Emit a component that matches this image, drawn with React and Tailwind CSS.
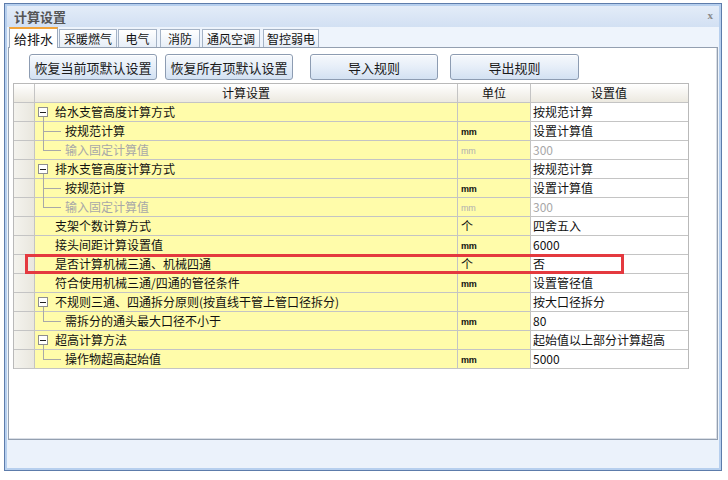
import React from "react";

const rows = [
  { t: "group", name: "给水支管高度计算方式", unit: "", value: "按规范计算" },
  { t: "child", name: "按规范计算", unit: "mm", value: "设置计算值" },
  { t: "child", last: true, dis: true, name: "输入固定计算值", unit: "mm", value: "300" },
  { t: "group", name: "排水支管高度计算方式", unit: "", value: "按规范计算" },
  { t: "child", name: "按规范计算", unit: "mm", value: "设置计算值" },
  { t: "child", last: true, dis: true, name: "输入固定计算值", unit: "mm", value: "300" },
  { t: "plain", name: "支架个数计算方式", unit: "个", value: "四舍五入" },
  { t: "plain", name: "接头间距计算设置值", unit: "mm", value: "6000" },
  { t: "plain", name: "是否计算机械三通、机械四通", unit: "个", value: "否" },
  { t: "plain", name: "符合使用机械三通/四通的管径条件", unit: "mm", value: "设置管径值" },
  { t: "group", name: "不规则三通、四通拆分原则(按直线干管上管口径拆分)", unit: "", value: "按大口径拆分" },
  { t: "child", last: true, name: "需拆分的通头最大口径不小于", unit: "mm", value: "80" },
  { t: "group", name: "超高计算方法", unit: "", value: "起始值以上部分计算超高" },
  { t: "child", last: true, name: "操作物超高起始值", unit: "mm", value: "5000" },
];

const tabs = [
  { t: "给排水", cls: "ml-[2px] w-[49px]" },
  { t: "采暖燃气", cls: "ml-[1px] w-[58px]" },
  { t: "电气", cls: "ml-[1px] w-[39px]" },
  { t: "消防", cls: "ml-[3px] w-[40px]" },
  { t: "通风空调", cls: "ml-[2px] w-[58px]" },
  { t: "智控弱电", cls: "ml-[3px] w-[56px]" },
];

function NameCell({ r }) {
  const color = r.dis ? "text-[#a8a8a8]" : "text-[#111]";
  if (r.t === "group") {
    return (
      <div className="relative w-[423px] h-full bg-[#fffcaa] border-r border-[#c4c4c4] flex items-center">
        <div className="absolute left-[3px] top-[4px] w-[10px] h-[10px] border border-[#8e8e8e] bg-white flex items-center justify-center">
          <div className="w-[6px] h-[1px] bg-[#222]" />
        </div>
        <div className="absolute left-[8px] top-[14px] w-[1px] h-[5px] bg-[#a8a8a8]" />
        <span className={`pl-[20px] ${color} whitespace-nowrap`}>{r.name}</span>
      </div>
    );
  }
  if (r.t === "child") {
    return (
      <div className="relative w-[423px] h-full bg-[#fffcaa] border-r border-[#c4c4c4] flex items-center">
        <div className={`absolute left-[8px] top-[-1px] w-[1px] bg-[#a8a8a8] ${r.last ? "h-[10px]" : "h-[20px]"}`} />
        <div className="absolute left-[8px] top-[9px] w-[18px] h-[1px] bg-[#a8a8a8]" />
        <span className={`pl-[30px] ${color} whitespace-nowrap`}>{r.name}</span>
      </div>
    );
  }
  return (
    <div className="relative w-[423px] h-full bg-[#fffcaa] border-r border-[#c4c4c4] flex items-center">
      <span className={`pl-[20px] ${color} whitespace-nowrap`}>{r.name}</span>
    </div>
  );
}

function Row({ r }) {
  return (
    <div className="flex h-[19px] border-b border-[#c4c4c4]">
      <div className="w-[21px] h-full bg-gradient-to-r from-[#f4f3ee] to-[#e9e7de] border-r border-[#c4c4c4]" />
      <NameCell r={r} />
      <div className="w-[73px] h-full bg-[#fffcaa] border-r border-[#c4c4c4] flex items-center pl-[3px]">
        {r.unit === "mm" ? (
          <span
            className={`text-[9px] pt-[3px] tracking-[-0.3px] ${r.dis ? "text-[#b0b0b0]" : "text-[#111] font-bold"}`}
            style={{ fontFamily: '"Liberation Sans", sans-serif' }}
          >
            mm
          </span>
        ) : (
          <span className="text-[#111]">{r.unit}</span>
        )}
      </div>
      <div className="w-[156px] h-full bg-white flex items-center pl-[2px]">
        <span className={r.dis ? "text-[#a8a8a8]" : "text-[#111]"}>{r.value}</span>
      </div>
    </div>
  );
}

function Btn({ children, w, ml }) {
  return (
    <div
      className={`${w} ${ml} h-[26px] rounded-[3px] border border-[#8d9cb2] bg-gradient-to-b from-[#f6f9fd] via-[#e6eef8] to-[#d3e1f2] flex items-center justify-center text-[13px] text-[#1a1a1a] shadow-[inset_0_1px_0_#ffffff]`}
    >
      {children}
    </div>
  );
}

export default function App() {
  return (
    <div
      className="w-[728px] h-[480px] bg-white pl-[4px] pt-[3px] text-[12px] leading-none"
      style={{ fontFamily: '"Noto Sans CJK SC", "Liberation Sans", sans-serif' }}
    >
      <div className="w-[718px] h-[468px] border border-[#5d7cab]">
        <div className="w-full h-full border-2 border-[#b6cfee] flex flex-col bg-[#eef4fb]">
          {/* Title bar */}
          <div className="h-[21px] flex items-center justify-between bg-gradient-to-b from-[#e3ecf8] to-[#d2e0f3] pl-[7px] pr-[6px]">
            <span className="text-[13px] font-bold text-[#555]">计算设置</span>
            <span className="text-[11px] font-bold text-[#8a8a8a] pb-[2px]" style={{ fontFamily: '"Liberation Serif", serif' }}>x</span>
          </div>
          {/* Tabs */}
          <div className="h-[20px] flex items-end bg-[#eef4fc] relative z-10">
            {tabs.map((tb, i) =>
              i === 0 ? (
                <div
                  key={tb.t}
                  className={`${tb.cls} h-[21px] mb-[-1px] flex items-center justify-center bg-white border border-[#9aa8bb] border-b-0 border-t-[2px] border-t-[#f2a43a] text-[13px] text-[#111]`}
                >
                  {tb.t}
                </div>
              ) : (
                <div
                  key={tb.t}
                  className={`${tb.cls} h-[18px] flex items-center justify-center bg-gradient-to-b from-white to-[#e7eef7] border border-[#a5b3c6] border-b-0 text-[12px] text-[#111]`}
                >
                  {tb.t}
                </div>
              )
            )}
          </div>
          {/* Panel */}
          <div className="ml-[1px] w-[710px] h-[393px] bg-white border border-[#939fb0] shadow-[inset_-1px_-1px_0_#d9dee6]">
            <div className="flex pt-[6px] pl-[20px]">
              <Btn w="w-[128px]" ml="">恢复当前项默认设置</Btn>
              <Btn w="w-[128px]" ml="ml-[8px]">恢复所有项默认设置</Btn>
              <Btn w="w-[128px]" ml="ml-[17px]">导入规则</Btn>
              <Btn w="w-[129px]" ml="ml-[12px]">导出规则</Btn>
            </div>
            <div className="relative mt-[3px] ml-[4px] w-[676px] border border-[#b9b9b9] border-b-0">
              {/* header */}
              <div className="flex h-[19px] border-b border-[#c4c4c4] bg-gradient-to-b from-white to-[#ece9e0]">
                <div className="w-[21px] h-full border-r border-[#c4c4c4]" />
                <div className="w-[423px] h-full border-r border-[#c4c4c4] flex items-center justify-center text-[#111]">计算设置</div>
                <div className="w-[73px] h-full border-r border-[#c4c4c4] flex items-center justify-center text-[#111]">单位</div>
                <div className="w-[156px] h-full flex items-center justify-center text-[#111]">设置值</div>
              </div>
              {rows.map((r, i) => (
                <Row key={i} r={r} />
              ))}
              {/* red highlight */}
              <div className="absolute left-[11px] top-[170px] w-[599px] h-[20px] border-[3px] border-[#e4393f]" />
            </div>
          </div>
          {/* bottom bar */}
          <div className="flex-1 bg-[#ebf2fb]" />
        </div>
      </div>
    </div>
  );
}
